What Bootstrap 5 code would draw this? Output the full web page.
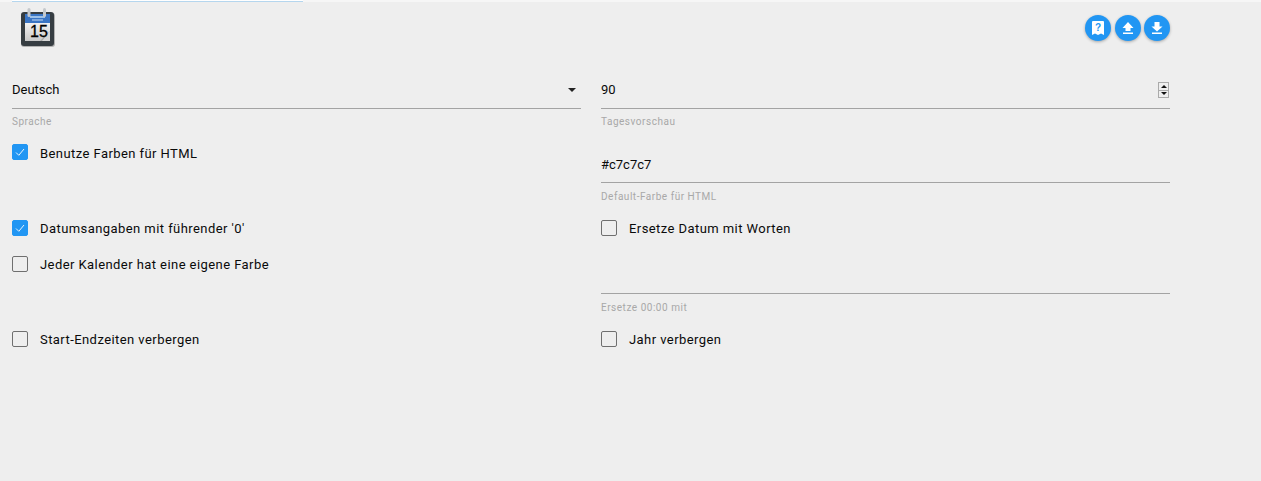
<!DOCTYPE html>
<html lang="de"><head><meta charset="utf-8"><title>Kalender</title>
<link rel="stylesheet" href="https://cdn.jsdelivr.net/npm/bootstrap@5.3.0/dist/css/bootstrap.min.css">
<style>
html,body{height:100%}
body{background:#eee;font-family:Roboto,"Liberation Sans",sans-serif;font-size:13px;color:#0a0a0a;overflow:hidden}
.topstrip{height:2px;background:#f6f6f6}
.topstrip div{width:291px;height:2px;margin-left:12px;border-top:1px solid #fff;border-bottom:1px solid #b5d6ee}
.page{width:1158px;margin-left:12px}
.head{height:48px}
.logo{margin:6px 0 0 8px;display:block}
.fabs{padding-top:13px;gap:3.5px}
.fab{width:26px;height:26px;border-radius:50%;background:#2196f3;border:0;padding:0;box-shadow:0 1px 3px rgba(0,0,0,.3);display:flex;align-items:center;justify-content:center}
.formgrid{display:grid;grid-template-columns:569px 569px;column-gap:20px;padding-top:25px}
.fieldbox{border-bottom:1px solid #a3a3a3;height:34px;padding-top:6px;line-height:18px;display:flex;justify-content:space-between;align-items:flex-start}
.fieldlow{padding-top:7px}
.fieldcap{font-size:10px;color:#a8a8a8;letter-spacing:.52px;line-height:12px;margin-top:7px}
.capb{margin-top:8px}
.caret{width:0;height:0;border:4.5px solid transparent;border-top:4px solid #222;border-bottom:0;margin:7px 5px 0 0}
.spin{width:11px;height:16px;border:1px solid #aaa;background:#eee;margin:1px 1px 0 0;display:flex;flex-direction:column}
.spin i{flex:1;display:flex;align-items:center;justify-content:center}
.spin i+i{border-top:1px solid #aaa}
.spin b{width:0;height:0;border:3px solid transparent}
.up{border-bottom:3px solid #111!important;border-top:0!important}
.dn{border-top:3px solid #111!important;border-bottom:0!important}
.chk{display:flex;align-items:flex-start;gap:12px;height:16px;letter-spacing:.43px;line-height:18px}
.chklow{line-height:20px}
.box{width:16px;height:16px;border:1px solid #6f6f6f;border-radius:2px;flex:none;display:block}
.box.on{background:#2196f3;border-color:#2196f3}
.m16{margin-top:16px}.m17{margin-top:17px}.m20{margin-top:20px}.m21{margin-top:21px}.m24{margin-top:24px}.m59{margin-top:59px}.m60{margin-top:60px}
</style></head><body>
<div class="topstrip"><div></div></div>
<div class="page">
 <div class="head d-flex justify-content-between">
  <svg class="logo" width="36" height="40" viewBox="0 0 36 40">
   <defs><linearGradient id="pg" x1="0" y1="0" x2="0" y2="1"><stop offset="0" stop-color="#f2f2f2"/><stop offset="1" stop-color="#c9c9c9"/></linearGradient></defs>
   <rect x="1" y="5" width="34" height="34" rx="3" fill="#8a8a8a" opacity=".6"/>
   <rect x="1" y="4" width="33" height="34" rx="3" fill="#363d42"/>
   <rect x="5" y="6" width="25" height="9" fill="#3a75c4"/>
   <rect x="10" y="8" width="15" height="2" fill="#9cc0e8"/><rect x="12" y="11" width="11" height="2" fill="#7fa8dc"/>
   <rect x="5" y="15" width="25" height="18" fill="url(#pg)"/>
   <path d="M30 23v10H20z" fill="#a9a9a9"/><path d="M30 23 22 33h8z" fill="#d6d6d6"/>
   <rect x="7.500" y="0" width="3" height="9" rx="1.500" fill="#c4c8cc"/><rect x="23" y="0" width="3" height="9" rx="1.500" fill="#c4c8cc"/>
   <text x="10" y="29" font-family="Liberation Sans" font-size="16" fill="#000" stroke="#000" stroke-width=".3">15</text>
  </svg>
  <div class="d-flex fabs">
   <button class="fab" aria-label="Hilfe"><svg width="12" height="15" viewBox="0 0 12 15"><path d="M1 0h10a1 1 0 0 1 1 1v13l-3-1.500-3 1.500-3-1.500L0 14V1a1 1 0 0 1 1-1z" fill="#fff"/><text x="6" y="10" text-anchor="middle" font-family="Liberation Sans" font-weight="700" font-size="10" fill="#2196f3">?</text></svg></button>
   <button class="fab" aria-label="Hochladen"><svg width="14" height="14" viewBox="0 0 14 14"><path d="M7 1 1.500 7H4.500v3h5V7h3zM2 11.500h10V13H2z" fill="#fff"/></svg></button>
   <button class="fab" aria-label="Herunterladen"><svg width="14" height="14" viewBox="0 0 14 14"><path d="M4.500 1h5v4.500h3L7 10.500 1.500 5.500h3zM2 11.500h10V13H2z" fill="#fff"/></svg></button>
  </div>
 </div>
 <div class="formgrid">
  <div>
   <div class="fieldbox"><span>Deutsch</span><span class="caret"></span></div>
   <div class="fieldcap">Sprache</div>
   <div class="chk chklow m16"><span class="box on"><svg width="14" height="14" viewBox="0 0 14 14" class="d-block"><path d="M3 7.500 5.800 10.300 11 4" fill="none" stroke="#e6f3fe" stroke-width="1"/></svg></span>Benutze Farben für HTML</div>
   <div class="chk m60"><span class="box on"><svg width="14" height="14" viewBox="0 0 14 14" class="d-block"><path d="M3 7.500 5.800 10.300 11 4" fill="none" stroke="#e6f3fe" stroke-width="1"/></svg></span>Datumsangaben mit führender '0'</div>
   <div class="chk m20"><span class="box"></span>Jeder Kalender hat eine eigene Farbe</div>
   <div class="chk m59"><span class="box"></span>Start-Endzeiten verbergen</div>
  </div>
  <div>
   <div class="fieldbox"><span>90</span><span class="spin"><i><b class="up"></b></i><i><b class="dn"></b></i></span></div>
   <div class="fieldcap">Tagesvorschau</div>
   <div class="fieldbox fieldlow m21"><span>#c7c7c7</span></div>
   <div class="fieldcap capb">Default-Farbe für HTML</div>
   <div class="chk m17"><span class="box"></span>Ersetze Datum mit Worten</div>
   <div class="fieldbox m24"></div>
   <div class="fieldcap capb">Ersetze 00:00 mit</div>
   <div class="chk m17"><span class="box"></span>Jahr verbergen</div>
  </div>
 </div>
</div>
<script src="https://cdn.jsdelivr.net/npm/bootstrap@5.3.0/dist/js/bootstrap.bundle.min.js"></script>
</body></html>
